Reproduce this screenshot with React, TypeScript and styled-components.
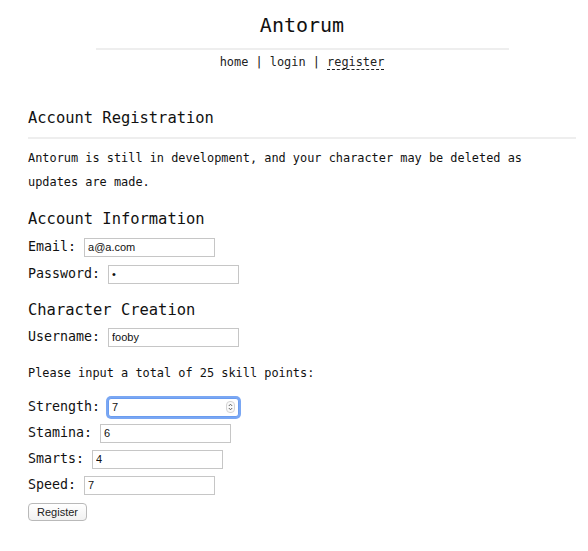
import React from "react";
import styled, { createGlobalStyle, css } from "styled-components";

const Global = createGlobalStyle`
  html, body { margin: 0; padding: 0; background: #ffffff; }
  body { font-family: "DejaVu Sans Mono", "Liberation Mono", monospace; color: #111111; }
`;

const Page = styled.div`
  padding: 0 12px 0 28px;
`;

const Header = styled.header`
  display: flex;
  flex-direction: column;
  align-items: center;
  padding-top: 13px;
`;

const Title = styled.h1`
  margin: 0;
  font-size: 20px;
  line-height: 24px;
  font-weight: normal;
`;

const HeaderRule = styled.div`
  width: 413px;
  border-top: 2px solid #eeeeee;
  margin-top: 11px;
`;

const Nav = styled.nav`
  margin-top: 4px;
  font-size: 11.9px;
  line-height: 16px;
  white-space: pre;
`;

const NavLink = styled.a<{ $current?: boolean }>`
  color: #222222;
  text-decoration: none;
  ${(p) =>
    p.$current &&
    css`
      border-bottom: 1px dashed #222222;
    `}
`;

const Main = styled.main`
  margin-top: 38px;
`;

const Heading = styled.h2<{ $gap: number }>`
  margin: ${(p) => p.$gap}px 0 0 0;
  font-size: 15.45px;
  line-height: 20px;
  font-weight: normal;
`;

const SectionRule = styled.div`
  border-top: 2px solid #eeeeee;
  margin-top: 9px;
`;

const Text = styled.p<{ $gap: number }>`
  margin: ${(p) => p.$gap}px 0 0 0;
  max-width: 525px;
  font-size: 11.9px;
  line-height: 24px;
`;

const Row = styled.div<{ $gap?: number }>`
  display: flex;
  align-items: center;
  height: 26px;
  margin-top: ${(p) => p.$gap ?? 0}px;
`;

const Label = styled.label`
  font-size: 13.3px;
  line-height: 26px;
  margin-right: 8px;
  white-space: pre;
`;

const FieldWrap = styled.span`
  position: relative;
  display: inline-flex;
`;

const Field = styled.input<{ $focused?: boolean }>`
  box-sizing: border-box;
  width: 131px;
  height: 19px;
  padding: 0 3px;
  border: 1px solid #c6c6c6;
  border-radius: 0;
  font-family: "Liberation Sans", Arial, sans-serif;
  font-size: 11px;
  color: #111111;
  background: #ffffff;
  outline: none;
  ${(p) =>
    p.$focused &&
    css`
      border-color: #6a9cf0;
      border-radius: 3px;
      box-shadow: 0 0 0 2px #7aa7f3;
    `}
`;

const Spinner = styled.span`
  position: absolute;
  right: 4px;
  top: 3px;
  width: 9px;
  height: 12px;
  border: 1px solid #d4d4d4;
  border-radius: 4px;
  box-sizing: border-box;
  display: flex;
  align-items: center;
  justify-content: center;
  background: #fafafa;
`;

const Button = styled.button`
  margin-top: 5px;
  box-sizing: border-box;
  width: 59px;
  height: 18px;
  padding: 0;
  border: 1px solid #b9b9b9;
  border-radius: 4px;
  background: linear-gradient(#ffffff, #f1f1f1);
  font-family: "Liberation Sans", Arial, sans-serif;
  font-size: 11px;
  color: #222222;
`;

const ButtonRow = styled.div`
  display: flex;
`;

export default function App() {
  return (
    <Page>
      <Global />
      <Header>
        <Title>Antorum</Title>
        <HeaderRule />
        <Nav>
          <NavLink href="#">home</NavLink>
          {" | "}
          <NavLink href="#">login</NavLink>
          {" | "}
          <NavLink href="#" $current>
            register
          </NavLink>
        </Nav>
      </Header>
      <Main>
        <Heading $gap={0}>Account Registration</Heading>
        <SectionRule />
        <Text $gap={7}>
          Antorum is still in development, and your character may be deleted as
          updates are made.
        </Text>
        <Heading $gap={15}>Account Information</Heading>
        <Row $gap={5}>
          <Label>Email:</Label>
          <Field type="text" defaultValue="a@a.com" readOnly />
        </Row>
        <Row $gap={1}>
          <Label>Password:</Label>
          <Field type="password" defaultValue="a" readOnly />
        </Row>
        <Heading $gap={13}>Character Creation</Heading>
        <Row $gap={4}>
          <Label>Username:</Label>
          <Field type="text" defaultValue="fooby" readOnly />
        </Row>
        <Text $gap={11}>Please input a total of 25 skill points:</Text>
        <Row $gap={9}>
          <Label>Strength:</Label>
          <FieldWrap>
            <Field type="text" defaultValue="7" readOnly $focused />
            <Spinner>
              <svg width="5" height="8" viewBox="0 0 5 8">
                <path d="M0.8 3 L2.5 1.2 L4.2 3" fill="none" stroke="#555" strokeWidth="0.9" />
                <path d="M0.8 5 L2.5 6.8 L4.2 5" fill="none" stroke="#555" strokeWidth="0.9" />
              </svg>
            </Spinner>
          </FieldWrap>
        </Row>
        <Row>
          <Label>Stamina:</Label>
          <Field type="text" defaultValue="6" readOnly />
        </Row>
        <Row>
          <Label>Smarts:</Label>
          <Field type="text" defaultValue="4" readOnly />
        </Row>
        <Row>
          <Label>Speed:</Label>
          <Field type="text" defaultValue="7" readOnly />
        </Row>
        <ButtonRow>
          <Button type="button">Register</Button>
        </ButtonRow>
      </Main>
    </Page>
  );
}
